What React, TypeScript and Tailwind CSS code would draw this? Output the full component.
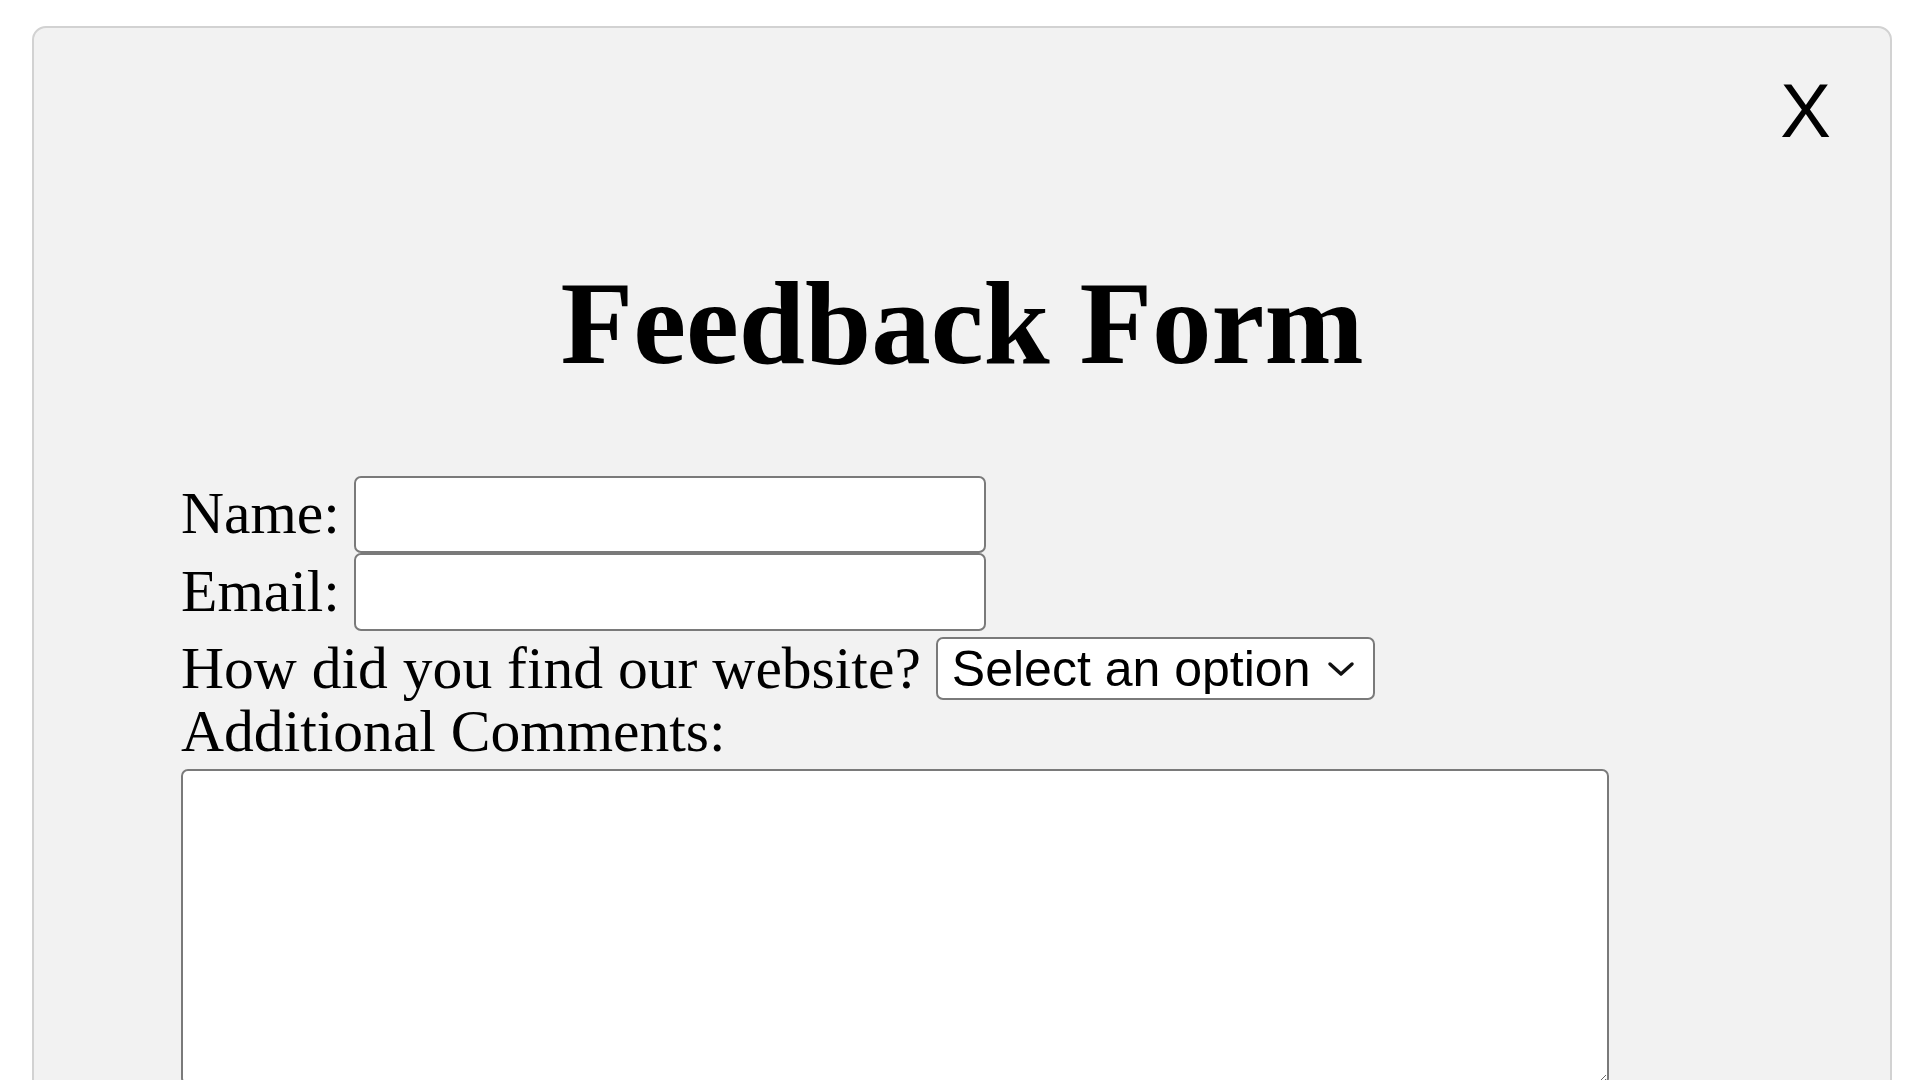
import { useState } from "react";

const serif = "font-['Liberation_Serif','Times_New_Roman',serif]";
const sans = "font-['Liberation_Sans',Arial,sans-serif]";

function Chevron() {
  return (
    <svg
      className="pointer-events-none absolute right-[20px] top-1/2 -translate-y-1/2"
      width="28"
      height="18"
      viewBox="0 0 28 18"
      fill="none"
    >
      <path d="M3 4 L14 14 L25 4" stroke="#111" strokeWidth="3.5" strokeLinecap="round" strokeLinejoin="round" />
    </svg>
  );
}

export default function App() {
  const [choice, setChoice] = useState("");

  return (
    <div className="h-screen overflow-hidden bg-white pt-[26px] pl-[32px] pr-[28px]">
      <div className="min-h-[1200px] rounded-[14px] border-2 border-[#d2d2d2] bg-[#f2f2f2] text-black">
        {/* close */}
        <div className="flex justify-end pt-[45px] pr-[59px]">
          <button className={`${sans} text-[76px] leading-none`}>X</button>
        </div>

        <h1 className={`${serif} mt-[115px] text-center text-[119px] font-bold leading-none`}>
          Feedback Form
        </h1>

        <form className={`${serif} mt-[92px] pl-[147px] text-[59.6px] leading-none`}>
          <div className="flex h-[78px] items-center gap-[14px]">
            <label htmlFor="name">Name:</label>
            <input
              id="name"
              type="text"
              className="h-[77px] w-[632px] rounded-[7px] border-2 border-[#7a7a7a] bg-white"
            />
          </div>
          <div className="flex h-[78px] items-center gap-[14px]">
            <label htmlFor="email">Email:</label>
            <input
              id="email"
              type="email"
              className="h-[78px] w-[632px] rounded-[7px] border-2 border-[#7a7a7a] bg-white"
            />
          </div>

          <div className="mt-[6px] flex h-[63px] items-center gap-[15px]">
            <label htmlFor="find">How did you find our website?</label>
            <div className="relative">
              <select
                id="find"
                value={choice}
                onChange={(e) => setChoice(e.target.value)}
                className={`${sans} h-[63px] w-[439px] appearance-none rounded-[7px] border-2 border-[#7a7a7a] bg-white pl-[14px] text-[50px] leading-none text-black`}
              >
                <option value="">Select an option</option>
                <option value="search">Search engine</option>
                <option value="social">Social media</option>
                <option value="friend">A friend</option>
              </select>
              <Chevron />
            </div>
          </div>

          <div className="mt-[2px]">
            <label htmlFor="comments">Additional Comments:</label>
          </div>
          <textarea
            id="comments"
            className="mt-[7px] block h-[316px] w-[1428px] rounded-[7px] border-2 border-[#7a7a7a] bg-white"
          />
        </form>
      </div>
    </div>
  );
}
